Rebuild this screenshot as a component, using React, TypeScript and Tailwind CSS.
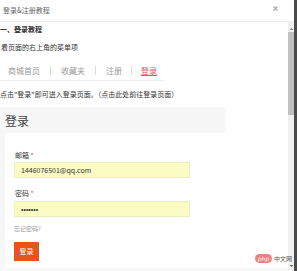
export default function App() {
  return (
    <div className="relative flex h-[271px] w-[297px] overflow-hidden bg-white font-['Noto_Sans_CJK_SC','Noto_Sans',sans-serif] text-[#333]">
      <div className="flex min-w-0 flex-1 flex-col">
        {/* title bar */}
        <div className="flex h-[22px] shrink-0 items-center justify-between border-b border-[#eee] pl-[3px] pr-[16px]">
          <span className="text-[7px] leading-none text-[#666]">登录&amp;注册教程</span>
          <svg width="5" height="5" viewBox="0 0 5 5" className="mb-[4px]">
            <path d="M0.5 0.5 L4.5 4.5 M4.5 0.5 L0.5 4.5" stroke="#aaa" strokeWidth="1.2" />
          </svg>
        </div>

        <div className="flex min-h-0 flex-1">
          {/* content */}
          <div className="flex min-w-0 flex-1 flex-col">
            <div className="h-[14px] text-[7px] font-bold leading-[14px]">一、登录教程</div>
            <div className="mt-[4px] h-[14px] pl-[1px] text-[7px] leading-[14px]">看页面的右上角的菜单项</div>

            {/* tabs */}
            <div className="mt-[7px] flex h-[20px] w-[165px] items-center border-b border-[#eee] text-[8px] leading-none text-[#999]">
              <span className="ml-[8px]">商城首页</span>
              <span className="mx-[10px] h-[9px] w-px bg-[#ddd]" />
              <span>收藏夹</span>
              <span className="mx-[10px] h-[9px] w-px bg-[#ddd]" />
              <span>注册</span>
              <span className="mx-[9px] h-[9px] w-px bg-[#ddd]" />
              <span className="text-[#e8505b] underline underline-offset-1">登录</span>
            </div>

            <div className="mt-[7px] h-[12px] text-[7px] leading-[12px]">
              点击"登录"即可进入登录页面。（点击此处前往登录页面）
            </div>

            {/* login card */}
            <div className="mt-[7px] flex flex-1 flex-col">
              <div className="flex h-[26px] w-[225px] items-center bg-[#f7f7f7] pl-[5px] pt-[2px] text-[12px] leading-none text-[#444]">
                登录
              </div>
              <div className="flex flex-1 flex-col border-b-[3px] border-l-[5px] border-[#f7f7f7] bg-white pl-[9px]">
                <div className="ml-[1px] mt-[17px] h-[10px] text-[7px] leading-[10px]">
                  邮箱 <span className="text-[#f05050]">*</span>
                </div>
                <div className="mt-[2px] flex h-[16px] w-[176px] items-center border border-[#ecefc0] bg-[#fafcc4] pl-[6px] text-[7px] text-[#333]">
                  1446076501@qq.com
                </div>
                <div className="ml-[1px] mt-[10px] h-[10px] text-[7px] leading-[10px]">
                  密码 <span className="text-[#f05050]">*</span>
                </div>
                <div className="mt-[3px] flex h-[16px] w-[176px] items-center border border-[#ecefc0] bg-[#fafcc4] pl-[6px] font-['Liberation_Sans',sans-serif] text-[7px] leading-none text-[#333]">
                  •••••••
                </div>
                <div className="mt-[7px] h-[10px] text-[6px] leading-[10px] text-[#999]">忘记密码?</div>
                <div className="mt-[8px] flex h-[19px] w-[25px] items-center justify-center bg-[#e8541e] text-[7px] text-white">
                  登录
                </div>
              </div>
            </div>
          </div>

          {/* scrollbar */}
          <div className="flex w-[6px] shrink-0 flex-col items-center bg-[#f0f0f0]">
            <svg width="5" height="4" viewBox="0 0 5 4" className="mt-[5px]">
              <path d="M0.5 3 L2.5 1 L4.5 3 Z" fill="#888" />
            </svg>
            <div className="mt-[1px] h-[83px] w-[6px] bg-[#c1c1c1]" />
            <div className="flex-1" />
            <svg width="5" height="4" viewBox="0 0 5 4" className="mb-[3px]">
              <path d="M0.5 1 L2.5 3 L4.5 1 Z" fill="#666" />
            </svg>
          </div>
        </div>
      </div>
      <div className="w-[3px] shrink-0 bg-[#4a4a4a]" />

      {/* watermark */}
      <div className="absolute bottom-[8px] right-[5px] flex items-center gap-[2px]">
        <span className="flex h-[9px] w-[17px] items-center justify-center rounded-full bg-[#f08080] font-['DejaVu_Sans',sans-serif] text-[6px] italic leading-none text-white">
          php
        </span>
        <span className="text-[6px] leading-none text-[#555]">中文网</span>
      </div>
    </div>
  );
}
